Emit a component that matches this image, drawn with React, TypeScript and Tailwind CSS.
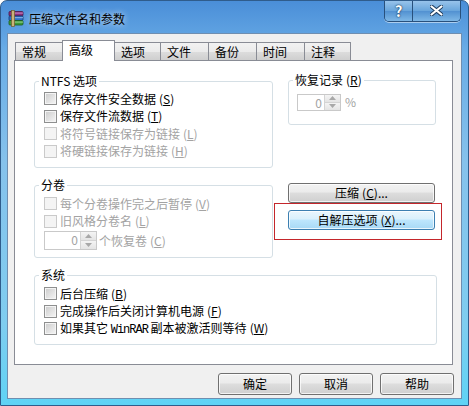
import type { ReactNode } from 'react';

const tabs = [
  { name: '常规', w: 'w-[48px]' },
  { name: '高级', w: 'w-[53px]', active: true },
  { name: '选项', w: 'w-[47px]' },
  { name: '文件', w: 'w-[49px]' },
  { name: '备份', w: 'w-[49px]' },
  { name: '时间', w: 'w-[49px]' },
  { name: '注释', w: 'w-[47px]' },
];

function Key({ k }: { k: string }) {
  return (
    <span className="ml-[3px]">
      (<u>{k}</u>)
    </span>
  );
}

function CheckBox({ label, k, disabled }: { label: ReactNode; k: string; disabled?: boolean }) {
  return (
    <div className="flex items-center h-[17.5px] gap-[3px] whitespace-nowrap">
      <span
        className={
          disabled
            ? 'w-[13px] h-[13px] shrink-0 border border-[#cacaca] bg-[#f4f4f4]'
            : 'w-[13px] h-[13px] shrink-0 border border-[#8e8f8f] bg-[linear-gradient(135deg,#cbcbcb,#f6f6f6)] shadow-[inset_0_0_0_1px_#f4f4f4]'
        }
      />
      <span className={disabled ? 'text-[#a3a3a3]' : 'text-black'}>
        {label}
        <Key k={k} />
      </span>
    </div>
  );
}

function Group({ title, className, children }: { title: ReactNode; className: string; children?: ReactNode }) {
  return (
    <div className={`relative shrink-0 rounded-[3px] border border-[#d5dfe5] ${className}`}>
      <span className="absolute -top-[9px] left-[4px] bg-white px-[2px] leading-[16px] whitespace-nowrap">{title}</span>
      {children}
    </div>
  );
}

function Arrow({ up }: { up?: boolean }) {
  return (
    <svg width="7" height="4" viewBox="0 0 7 4">
      <path d={up ? 'M0 4 L3.5 0 L7 4 Z' : 'M0 0 L3.5 4 L7 0 Z'} fill="#a8a8a8" />
    </svg>
  );
}

function Spin({ className }: { className: string }) {
  return (
    <div className={`flex shrink-0 border border-[#c9c9c9] bg-white ${className}`}>
      <span className="flex-1 text-right pr-[2px] text-[#a3a3a3] leading-[15px]">0</span>
      <span className="w-[16px] flex flex-col border-l border-[#d4d4d4]">
        <span className="flex-1 flex items-center justify-center bg-[linear-gradient(#f4f4f4,#e4e4e4)] border-b border-[#d4d4d4]">
          <Arrow up />
        </span>
        <span className="flex-1 flex items-center justify-center bg-[linear-gradient(#f4f4f4,#e4e4e4)]">
          <Arrow />
        </span>
      </span>
    </div>
  );
}

function Btn({ children, focused, className }: { children: ReactNode; focused?: boolean; className: string }) {
  return (
    <button
      className={`flex items-center justify-center rounded-[3px] border text-black leading-none whitespace-nowrap shadow-[inset_0_0_0_1px_rgba(255,255,255,0.75)] ${
        focused
          ? 'border-[#3c7fb1] bg-[linear-gradient(#eaf6fd_0%,#d9f0fc_45%,#bee6fd_50%,#a7d9f5_100%)]'
          : 'border-[#707070] bg-[linear-gradient(#f2f2f2_0%,#ebebeb_45%,#dddddd_50%,#cfcfcf_100%)]'
      } ${className}`}
    >
      {children}
    </button>
  );
}

function RarIcon() {
  return (
    <svg width="17" height="17" viewBox="0 0 17 17">
      <rect x="1" y="1.5" width="14" height="4.5" rx="1" fill="#8a2f7e" stroke="#4a1444" strokeWidth="0.8" />
      <rect x="1" y="6" width="14" height="4.5" rx="1" fill="#2f6fc6" stroke="#173a6e" strokeWidth="0.8" />
      <rect x="1" y="10.5" width="14" height="4.5" rx="1" fill="#3c9a3a" stroke="#1d5a1c" strokeWidth="0.8" />
      <rect x="3" y="2.5" width="12" height="1.2" fill="#d7a0cf" opacity="0.7" />
      <rect x="3" y="7" width="12" height="1.2" fill="#9cc4f0" opacity="0.7" />
      <rect x="3" y="11.5" width="12" height="1.2" fill="#a8dca4" opacity="0.7" />
      <rect x="3.5" y="0.5" width="3" height="16" fill="#c9b27a" stroke="#6e5a2c" strokeWidth="0.7" />
    </svg>
  );
}

export default function App() {
  return (
    <div className="w-[469px] h-[406px] flex flex-col overflow-hidden rounded-t-[7px] border border-[#2f5c8c] bg-[linear-gradient(180deg,#4a8ed8_0%,#69ace6_12%,#86c2ec_40%,#7fcdf0_80%,#5fd3f5_100%)] font-['Noto_Sans_CJK_SC','Noto_Sans',sans-serif] text-[12px] text-black">
      {/* title bar */}
      <div className="h-[32px] flex items-start justify-between shrink-0">
        <div className="flex items-center gap-[4px] pl-[7px] pt-[9px]">
          <RarIcon />
          <span className="leading-[16px] [text-shadow:0_0_6px_rgba(255,255,255,0.9)]">压缩文件名和参数</span>
        </div>
        <div className="flex -mt-px mr-[7px] h-[22px] rounded-b-[5px] border border-t-0 border-[#28507c] overflow-hidden shadow-[0_1px_0_rgba(255,255,255,0.5)]">
          <span className="w-[28px] flex items-center justify-center border-r border-[#28507c] bg-[linear-gradient(#9cc6ec,#6aa6dc_50%,#4f8fd0_51%,#7fb8e6)] text-white font-bold text-[15px] leading-none [text-shadow:0_0_2px_#123456,0_0_1px_#123456]">
            ?
          </span>
          <span className="w-[47px] flex items-center justify-center bg-[linear-gradient(#9cc6ec,#6aa6dc_50%,#4f8fd0_51%,#7fb8e6)]">
            <svg width="13" height="11" viewBox="0 0 13 11">
              <path d="M1 1 L12 10 M12 1 L1 10" stroke="#1f3d5e" strokeWidth="4" strokeLinecap="round" />
              <path d="M1.5 1.5 L11.5 9.5 M11.5 1.5 L1.5 9.5" stroke="#ffffff" strokeWidth="2.2" strokeLinecap="round" />
            </svg>
          </span>
        </div>
      </div>

      {/* client */}
      <div className="mx-[6px] mb-[6px] flex-1 flex flex-col border border-[#6f8eb0] bg-[#f0f0f0]">
        <div className="flex items-end pt-[6px] pl-[7px] h-[26px]">
          {tabs.map((t, i) =>
            t.active ? (
              <div
                key={t.name}
                className={`relative z-10 -ml-px -mb-px h-[21px] ${t.w} border border-b-0 border-[#898c95] bg-white pl-[6px] leading-[18px]`}
              >
                {t.name}
              </div>
            ) : (
              <div
                key={t.name}
                className={`${i > 0 ? '-ml-px' : ''} h-[18px] ${t.w} border border-b-0 border-[#898c95] bg-[linear-gradient(#f2f2f2,#ebebeb_50%,#dddddd_51%,#cfcfcf)] pl-[6px] leading-[18px]`}
              >
                {t.name}
              </div>
            ),
          )}
        </div>

        {/* panel */}
        <div className="ml-[6px] w-[439px] h-[305px] border border-[#898c95] bg-white pl-[19px] pt-[20px] flex flex-col">
          <div className="flex gap-[15px] items-start">
            <Group title="NTFS 选项" className="w-[239px] h-[87px] pt-[8px] pl-[9px]">
              <CheckBox label="保存文件安全数据" k="S" />
              <CheckBox label="保存文件流数据" k="T" />
              <CheckBox label="将符号链接保存为链接" k="L" disabled />
              <CheckBox label="将硬链接保存为链接" k="H" disabled />
            </Group>
            <Group
              title={
                <>
                  恢复记录<Key k="R" />
                </>
              }
              className="-mt-px w-[148px] h-[45px] pt-[12px] pl-[8px]"
            >
              <div className="flex items-center gap-[4px]">
                <Spin className="w-[44px] h-[17px]" />
                <span className="text-[#a3a3a3]">%</span>
              </div>
            </Group>
          </div>

          <div className="flex gap-[15px] items-start mt-[17px]">
            <Group title="分卷" className="w-[239px] h-[73px] pt-[9px] pl-[9px]">
              <CheckBox label="每个分卷操作完之后暂停" k="V" disabled />
              <CheckBox label="旧风格分卷名" k="L" disabled />
              <div className="flex items-center gap-[2px] mt-[1px]">
                <Spin className="w-[53px] h-[19px]" />
                <span className="text-[#a3a3a3]">
                  个恢复卷
                  <Key k="C" />
                </span>
              </div>
            </Group>
            <div className="relative -mt-[2px] flex flex-col gap-[7px]">
              <Btn className="w-[147px] h-[20px]">
                压缩<Key k="C" />...
              </Btn>
              <Btn focused className="w-[147px] h-[20px]">
                自解压选项<Key k="X" />...
              </Btn>
              <div className="absolute left-[-14px] top-[20px] w-[168px] h-[37px] border border-[#c4262b]" />
            </div>
          </div>

          <Group title="系统" className="mt-[17px] w-[403px] h-[70px] pt-[9px] pl-[9px]">
            <CheckBox label="后台压缩" k="B" />
            <CheckBox label="完成操作后关闭计算机电源" k="F" />
            <CheckBox
              label={
                <>
                  如果其它 <span className="font-['Liberation_Mono',monospace] tracking-[-1px]">WinRAR</span> 副本被激活则等待
                </>
              }
              k="W"
            />
          </Group>
        </div>

        <div className="flex justify-end gap-[7px] mt-[8px] mr-[7px]">
          <Btn className="w-[74px] h-[22px]">确定</Btn>
          <Btn className="w-[74px] h-[22px]">取消</Btn>
          <Btn className="w-[74px] h-[22px]">帮助</Btn>
        </div>
      </div>
    </div>
  );
}
